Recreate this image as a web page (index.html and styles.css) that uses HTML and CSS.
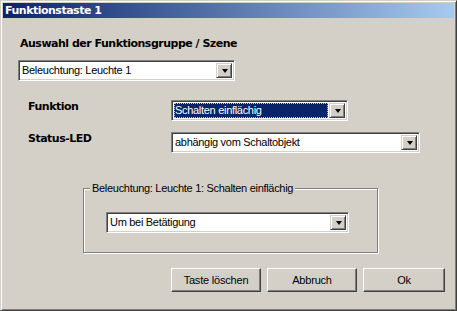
FILE: index.html
```html
<!DOCTYPE html>
<html lang="de">
<head>
  <meta charset="UTF-8" />
  <title>Funktionstaste 1</title>
  <link rel="stylesheet" href="styles.css">
</head>
<body>
  <div class="window">
    <div class="title-bar">Funktionstaste 1</div>
    <div class="client">
      <div class="caption">Auswahl der Funktionsgruppe / Szene</div>
      <div class="combo combo-group">
        <div class="combo-text">Beleuchtung: Leuchte 1</div>
        <div class="combo-btn"><span class="arrow"></span></div>
      </div>

      <div class="row row-first">
        <div class="row-label">Funktion</div>
        <div class="combo combo-func">
          <div class="combo-text selected">Schalten einflächig</div>
          <div class="combo-btn"><span class="arrow"></span></div>
        </div>
      </div>
      <div class="row">
        <div class="row-label">Status-LED</div>
        <div class="combo combo-led">
          <div class="combo-text">abhängig vom Schaltobjekt</div>
          <div class="combo-btn"><span class="arrow"></span></div>
        </div>
      </div>

      <div class="group-box">
        <span class="group-legend">Beleuchtung: Leuchte 1: Schalten einflächig</span>
        <div class="combo combo-action">
          <div class="combo-text">Um bei Betätigung</div>
          <div class="combo-btn"><span class="arrow"></span></div>
        </div>
      </div>

      <div class="buttons">
        <button class="btn btn-wide">Taste löschen</button>
        <button class="btn btn-wide">Abbruch</button>
        <button class="btn btn-ok">Ok</button>
      </div>
    </div>
  </div>
</body>
</html>
```

FILE: styles.css
```css
:root {
  --face: #d4d0c8;
  --shadow: #808080;
  --dark: #404040;
  --light: #ffffff;
  --select: #0a246a;
}

* {
  margin: 0;
  padding: 0;
  box-sizing: border-box;
}

body {
  background: var(--face);
  font-family: "Liberation Sans", Arial, sans-serif;
  font-size: 11px;
  color: #000;
}

.window {
  width: 457px;
  height: 311px;
  padding: 2px;
  background: var(--face);
  border: 1px solid;
  border-color: var(--face) var(--dark) var(--dark) var(--face);
  box-shadow: inset 1px 1px var(--light), inset -1px -1px var(--shadow);
}

.title-bar {
  height: 15px;
  padding-left: 2px;
  line-height: 15px;
  background: linear-gradient(to right, #0a246a, #a6caf0);
  color: #fff;
  font-family: "DejaVu Sans", Verdana, sans-serif;
  font-weight: bold;
  font-size: 11px;
  letter-spacing: -0.5px;
}

.client {
  display: flex;
  flex-direction: column;
}

.caption,
.row-label {
  font-family: "DejaVu Sans", Verdana, sans-serif;
  font-weight: bold;
  font-size: 11px;
  line-height: 13px;
  letter-spacing: -0.5px;
}

.caption {
  margin: 19px 0 0 17px;
}

/* sunken combo box */
.combo {
  display: flex;
  height: 21px;
  padding: 2px;
  background: #fff;
  border: 1px solid;
  border-color: var(--shadow) var(--light) var(--light) var(--shadow);
  box-shadow: inset 1px 1px var(--dark), inset -1px -1px var(--face);
}

.combo-text {
  flex: 1;
  padding-left: 1px;
  line-height: 15px;
  letter-spacing: -0.3px;
  white-space: nowrap;
  overflow: hidden;
}

.combo-text.selected {
  margin-right: 1px;
  background: var(--select);
  color: #fff;
  outline: 1px dotted #f0c060;
  outline-offset: -1px;
}

.combo-btn {
  width: 16px;
  height: 15px;
  display: flex;
  align-items: center;
  justify-content: center;
  background: var(--face);
  border: 1px solid;
  border-color: var(--face) var(--dark) var(--dark) var(--face);
  box-shadow: inset 1px 1px var(--light), inset -1px -1px var(--shadow);
}

.arrow {
  width: 0;
  height: 0;
  border-left: 3.5px solid transparent;
  border-right: 3.5px solid transparent;
  border-top: 4px solid #000;
  margin-left: 1px;
}

.combo-group {
  width: 217px;
  margin: 10px 0 0 15px;
}

.row {
  display: flex;
  align-items: flex-start;
  margin: 11px 0 0 25px;
}

.row-first {
  margin-top: 19px;
}

.row-label {
  width: 143px;
}

.combo-func {
  width: 177px;
}

.combo-led {
  width: 249px;
}

/* etched group frame */
.group-box {
  position: relative;
  width: 295px;
  height: 65px;
  margin: 35px 0 0 80px;
  padding: 23px 0 0 22px;
  border: 1px solid var(--shadow);
  box-shadow: 1px 1px var(--light), inset 1px 1px var(--light);
}

.group-legend {
  position: absolute;
  left: 6px;
  top: -7px;
  padding: 0 2px;
  line-height: 13px;
  background: var(--face);
  letter-spacing: -0.3px;
}

.combo-action {
  width: 243px;
}

.buttons {
  display: flex;
  gap: 6px;
  margin: 15px 0 0 168px;
}

.btn {
  height: 24px;
  background: var(--face);
  font-family: "Liberation Sans", Arial, sans-serif;
  font-size: 11px;
  letter-spacing: -0.2px;
  color: #000;
  border: 1px solid;
  border-color: var(--light) var(--dark) var(--dark) var(--light);
  box-shadow: inset -1px -1px var(--shadow);
}

.btn-wide {
  width: 90px;
}

.btn-ok {
  width: 82px;
}
```
